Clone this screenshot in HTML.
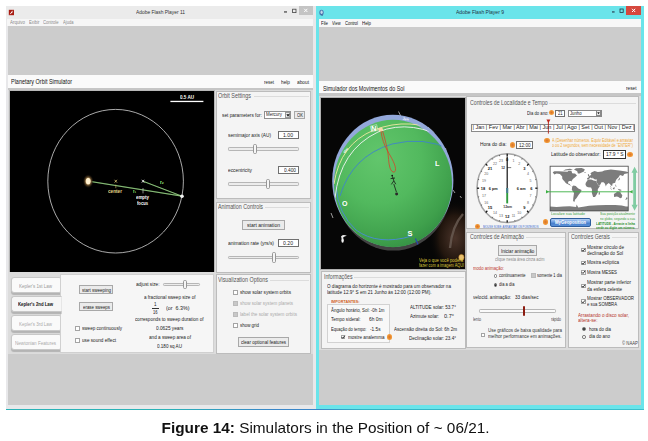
<!DOCTYPE html>
<html><head><meta charset="utf-8"><title>Figure 14</title>
<style>
html,body{margin:0;padding:0;background:#fff;}
body{width:648px;height:441px;position:relative;overflow:hidden;font-family:"Liberation Sans",sans-serif;}
.a{position:absolute;box-sizing:border-box;}
.t{position:absolute;white-space:pre;line-height:1;transform-origin:0 50%;}
.p{position:absolute;box-sizing:border-box;background:#f4f4f4;border:1.3px solid #bcbcbc;}
.btn{position:absolute;box-sizing:border-box;background:#ebebeb;border:0.9px solid #a8a8a8;}
.inp{position:absolute;box-sizing:border-box;background:#fff;border:0.8px solid #707070;}
.cb{position:absolute;box-sizing:border-box;background:#fff;border:0.8px solid #a4a4a4;width:4.6px;height:4.6px;}
.cbg{background:#c8c8c8;border-color:#bbb;}
.trk{position:absolute;box-sizing:border-box;height:3.6px;background:#ececec;border:0.7px solid #b6b6b6;border-radius:1.2px;margin-top:-0.5px;}
.thb{position:absolute;box-sizing:border-box;width:4px;height:10.2px;background:#f6f6f6;border:0.8px solid #969696;border-radius:1.6px;margin-left:-0.2px;}
.tab{position:absolute;box-sizing:border-box;background:#fafafa;border:0.8px solid #c8c8c8;border-radius:3px;box-shadow:0.6px 1.2px 0.8px #b4b4b4;}
.ln{position:absolute;height:0.8px;background:#dcdcdc;}
.oi{position:absolute;width:5.2px;height:5.2px;border-radius:50%;background:radial-gradient(#d8702a 0,#e88a30 35%,#f4a040 70%,#f6b868 100%);box-sizing:border-box;}
#cap{position:absolute;left:161.6px;top:420px;font-size:15.35px;line-height:1;color:#111;white-space:pre;}
</style></head>
<body>
<div id="shot" class="a" style="left:0;top:0;width:648px;height:441px;filter:blur(0.35px);">
<!-- ================= LEFT WINDOW ================= -->
<div class="a" style="left:6px;top:6px;width:309.8px;height:402.7px;background:#e8e8ea;"></div>
<div class="a" style="left:8px;top:6px;width:304.8px;height:398.8px;background:#cccccc;"></div>
<div class="a" style="left:6px;top:6px;width:307px;height:12.6px;background:#ebebeb;"></div>
<div class="a" style="left:7px;top:18.6px;width:306px;height:7.9px;background:#f6f6f6;"></div>
<div class="a" style="left:299px;top:6px;width:13.7px;height:8.6px;background:#c4c4c4;"></div>
<svg class="a" style="left:0;top:0" width="648" height="441" viewBox="0 0 648 441">
  <rect x="8.8" y="9.8" width="5.2" height="5.4" fill="#a81c12"/>
  <path d="M10.2 14.2 L12.6 10.8 M11 12.6 h1.4" stroke="#fff" stroke-width="0.9"/>
  <rect x="284" y="11.4" width="3" height="1.1" fill="#333"/>
  <rect x="292.6" y="9.2" width="3.4" height="3.4" fill="none" stroke="#444" stroke-width="0.8"/>
  <path d="M304.2 8.8 L307.4 12 M307.4 8.8 L304.2 12" stroke="#fff" stroke-width="1"/>
</svg>
<!-- title strip -->
<div class="a" style="left:8px;top:75.4px;width:304.8px;height:12.2px;background:#fafafa;"></div>
<div class="a" style="left:8px;top:87.6px;width:304.8px;height:266px;background:#dcdcdc;"></div>
<div class="a" style="left:8px;top:87.6px;width:304.8px;height:2.6px;background:#c6c6c6;"></div>
<!-- black stage -->
<div class="a" style="left:9px;top:90px;width:206px;height:182.4px;background:#b8b8b8;"></div>
<div class="a" style="left:10.2px;top:91.2px;width:203.8px;height:180.4px;background:#000;"></div>
<svg class="a" style="left:0;top:0" width="648" height="441" viewBox="0 0 648 441">
<defs><radialGradient id="sung"><stop offset="0" stop-color="#fff4d8"/><stop offset="0.4" stop-color="#f0dcae"/><stop offset="0.55" stop-color="#6e5430"/><stop offset="1" stop-color="#1a1004" stop-opacity="0"/></radialGradient></defs>
<ellipse cx="115.6" cy="181.2" rx="67.8" ry="71.8" fill="none" stroke="#d4d4d4" stroke-width="0.8"/>
<rect x="170.4" y="100.8" width="33" height="1.3" fill="#fff"/>
<path d="M88.5 181.2 L182 196.2 M143 181.2 L182 196.2" stroke="#58b048" stroke-width="1.2" fill="none" opacity="0.6"/>
<path d="M88.5 181.2 L182 196.2 M143 181.2 L182 196.2" stroke="#c4eeb0" stroke-width="0.6" fill="none"/>
<ellipse cx="88.2" cy="181.2" rx="5.4" ry="7" fill="url(#sung)"/>
<ellipse cx="88.2" cy="181.2" rx="1.9" ry="2.9" fill="#fff0d0"/>
<circle cx="182" cy="196.2" r="1.8" fill="#f4f4f4"/>
<path d="M114.6 179.8 l2.4 2.8 m0 -2.8 l-2.4 2.8" stroke="#f0dc80" stroke-width="0.7"/>
<path d="M115.8 184.6 v3.6" stroke="#c8b860" stroke-width="0.6"/>
<path d="M141.8 179.8 l2.4 2.8 m0 -2.8 l-2.4 2.8" stroke="#fff" stroke-width="0.8"/>
<path d="M143 188 v5.4" stroke="#ddd" stroke-width="0.6"/>
</svg>
<!-- Orbit Settings -->
<div class="p" style="left:216px;top:90.6px;width:94.6px;height:108.6px;"></div>
<div class="ln" style="left:253.5px;top:96px;width:55px;"></div>
<div class="inp" style="left:264.4px;top:110.8px;width:26.6px;height:8.6px;border-color:#909090;"></div>
<div class="a" style="left:284.8px;top:111.8px;width:5.4px;height:6.6px;background:#ececec;border:0.6px solid #9a9a9a;"></div>
<svg class="a" style="left:285.6px;top:113.8px" width="4" height="3" viewBox="0 0 4 3"><path d="M0.4 0.3 L3.6 0.3 L2 2.7 Z" fill="#111"/></svg>
<div class="btn" style="left:294.4px;top:110.8px;width:10.4px;height:8.6px;"></div>
<div class="inp" style="left:278px;top:131.4px;width:20.8px;height:7.4px;"></div>
<div class="trk" style="left:228px;top:147.6px;width:70.8px;"></div>
<div class="thb" style="left:253.6px;top:143.8px;"></div>
<div class="inp" style="left:278px;top:166.2px;width:20.8px;height:7.6px;"></div>
<div class="trk" style="left:228px;top:182.6px;width:70.8px;"></div>
<div class="thb" style="left:266.2px;top:178.8px;"></div>
<!-- Animation Controls -->
<div class="p" style="left:216px;top:202px;width:94.6px;height:70.6px;"></div>
<div class="ln" style="left:264.5px;top:207px;width:44px;"></div>
<div class="btn" style="left:242.3px;top:220px;width:42.6px;height:9.6px;"></div>
<div class="inp" style="left:278px;top:239.4px;width:20.8px;height:7.8px;"></div>
<div class="trk" style="left:228px;top:256.2px;width:70.8px;"></div>
<div class="thb" style="left:272.2px;top:252.4px;"></div>
<!-- Visualization Options -->
<div class="p" style="left:216px;top:274.4px;width:94.6px;height:79.2px;"></div>
<div class="ln" style="left:269.5px;top:280px;width:39px;"></div>
<div class="cb" style="left:233.2px;top:290.4px;"></div>
<div class="cb cbg" style="left:233.2px;top:301.2px;"></div>
<div class="cb cbg" style="left:233.2px;top:312.2px;"></div>
<div class="cb" style="left:233.2px;top:323.2px;"></div>
<div class="btn" style="left:238.2px;top:337.2px;width:50.4px;height:9.6px;"></div>
<!-- tabs + sweep panel -->
<div class="tab" style="left:10.6px;top:277.2px;width:51px;height:16px;"></div>
<div class="tab" style="left:10.6px;top:315.4px;width:51px;height:16px;"></div>
<div class="tab" style="left:10.6px;top:334.4px;width:51px;height:16px;"></div>
<div class="p" style="left:59.6px;top:273.6px;width:154.6px;height:79.4px;border-color:#d0d0d0;background:#f6f6f6;"></div>
<div class="tab" style="left:10.6px;top:296.2px;width:51px;height:16px;border-right:none;border-radius:3px 0 0 3px;background:#f6f6f6;clip-path:inset(-2px 0 -3px -2px);"></div>
<div class="btn" style="left:79.2px;top:285px;width:33.6px;height:9px;"></div>
<div class="btn" style="left:79.2px;top:302.4px;width:33.6px;height:9px;"></div>
<div class="cb" style="left:75.4px;top:326px;"></div>
<div class="cb" style="left:75.4px;top:338.2px;"></div>
<div class="trk" style="left:163px;top:283.4px;width:36.8px;"></div>
<div class="thb" style="left:183.6px;top:279.8px;height:9.4px;"></div>
<div class="a" style="left:151.6px;top:308px;width:7.4px;height:0.7px;background:#333;"></div>

<!-- ================= RIGHT WINDOW ================= -->
<div class="a" style="left:315.7px;top:6px;width:328.5px;height:402.8px;background:#6ae4ea;"></div>
<div class="a" style="left:318.8px;top:19px;width:322.2px;height:385.6px;background:#cccccc;"></div>
<div class="a" style="left:318.8px;top:19px;width:322.2px;height:7.6px;background:#f7f7f7;"></div>
<div class="a" style="left:626px;top:6px;width:15px;height:8.6px;background:#d6483e;"></div>
<svg class="a" style="left:0;top:0" width="648" height="441" viewBox="0 0 648 441">
  <ellipse cx="321.5" cy="12.6" rx="2.2" ry="2.9" fill="#4a78b0"/>
  <ellipse cx="321.6" cy="12.2" rx="1.1" ry="1.7" fill="#c4d8ea"/>
  <path d="M321.6 14.4 l0.8 1.6" stroke="#3a5a8a" stroke-width="0.8"/>
  <rect x="612" y="11.4" width="2.6" height="1.1" fill="#234"/>
  <rect x="620" y="9" width="3.2" height="3.4" fill="none" stroke="#234" stroke-width="0.8"/>
  <path d="M632 8.8 L635.2 12 M635.2 8.8 L632 12" stroke="#fff" stroke-width="1"/>
</svg>
<div class="a" style="left:318.8px;top:81.2px;width:322.2px;height:12.2px;background:#fafafa;"></div>
<div class="a" style="left:318.8px;top:93.4px;width:322.2px;height:257px;background:#dcdcdc;"></div>
<div class="a" style="left:318.8px;top:93.4px;width:322.2px;height:2.6px;background:#c6c6c6;"></div>
<!-- sphere stage -->
<div class="a" style="left:320.4px;top:96.6px;width:145.4px;height:173.4px;background:#b0b0b0;"></div>
<div class="a" style="left:321.4px;top:97.6px;width:143.6px;height:171.4px;background:#060606;"></div>
<svg class="a" style="left:0;top:0" width="648" height="441" viewBox="0 0 648 441">
<defs>
<clipPath id="stg"><rect x="321.4" y="97.6" width="143.6" height="171.4"/></clipPath>
<radialGradient id="grn" cx="0.38" cy="0.3" r="0.8"><stop offset="0" stop-color="#62c66c"/><stop offset="0.45" stop-color="#52b95e"/><stop offset="0.8" stop-color="#3fa04c"/><stop offset="1" stop-color="#2f8a40"/></radialGradient>
<radialGradient id="neb" cx="0.5" cy="0.5" r="0.5"><stop offset="0" stop-color="#4a342a"/><stop offset="0.6" stop-color="#22160e"/><stop offset="1" stop-color="#060606" stop-opacity="0"/></radialGradient>
<clipPath id="disc"><ellipse cx="393.2" cy="183.2" rx="59.4" ry="64.6"/></clipPath>
</defs>
<g clip-path="url(#stg)">
<ellipse cx="455" cy="238" rx="26" ry="38" fill="url(#neb)"/>
<path d="M463 214 Q452 226 450 248" stroke="#6a5c54" stroke-width="2.4" fill="none" opacity="0.8"/>
<g stroke="#d8d8d8" stroke-width="0.8" fill="none" opacity="0.9"><path d="M398.5 111.5 l3 6"/><path d="M428 127 l6.5 6"/><path d="M445.5 148 l1.8 10"/><path d="M336.5 172 l0.6 5"/><path d="M449 176 l-0.6 9"/><path d="M453 190 l2 3"/><path d="M460 196 l1.5 2"/><path d="M375 246.5 l6 1.5"/><path d="M331 213 l2 5"/></g>
<path d="M341 236.5 q2.2 -2.6 6 -0.6 q-3.6 -0.2 -5 3.6 z" fill="#e8e8e8"/>
<ellipse cx="342.6" cy="240.4" rx="1.2" ry="2.4" fill="#f4f4f4"/>
<ellipse cx="393.4" cy="185.6" rx="58.4" ry="65" fill="#424242"/>
<ellipse cx="392.8" cy="180.8" rx="60.6" ry="66" fill="#93a8da"/>
<ellipse cx="393" cy="183.5" rx="59" ry="63.7" fill="url(#grn)"/>
<g clip-path="url(#disc)" fill="none">
<path d="M340 196 Q352 156 392 144 Q424 136 452 150" stroke="#3f84c8" stroke-width="0.9"/>
<path d="M336 186 Q338 214 356 230 Q378 246 412 236" stroke="#4a8ad8" stroke-width="0.9"/>
<path d="M334 184 Q340 144 374 130 Q410 116 446 134" stroke="#f0e8a0" stroke-width="0.9"/>
<path d="M335 198 Q340 150 378 132 Q412 118 452 142" stroke="#f4f4f4" stroke-width="0.9"/>
</g>
<text x="402.5" y="119.6" font-size="3.4" font-weight="bold" fill="#fff" font-family="Liberation Sans, sans-serif" transform="rotate(10 402.5 119.6)">Jun</text>
<text x="345" y="153.5" font-size="3.4" font-weight="bold" fill="#fff" font-family="Liberation Sans, sans-serif" transform="rotate(-52 345 153.5)">Mai</text>
<path d="M415.4 238.4 l2.6 6" stroke="#2a4ab0" stroke-width="1.2"/>
<path d="M370.2 126.2 l6.4 -1.6 l1.4 5.6 l-6.4 1.6 z" stroke="#f0f0f0" stroke-width="0.5" fill="none"/>
<ellipse cx="380.6" cy="129.6" rx="2.4" ry="2" fill="#f6d8a8"/>
<path d="M381 131 C381.6 138 384.6 146 387.6 151 C391 157 396.6 166 395.4 170.6 C394.4 173.6 391.4 172 390 168 C388.4 163 388.6 156 387.6 151 C386.6 145 384.4 137 382.6 131" stroke="#d2452a" stroke-width="0.8" fill="none"/>
<g stroke="#151515" stroke-width="0.8" fill="none"><path d="M392.4 176.4 l1.4 4.4 l-2.4 3.6 M393.8 180.8 l2 3.4 M390.6 178.6 l4.4 -0.6 M393.8 184 l2.6 8"/></g>
<circle cx="392.2" cy="175.6" r="0.9" fill="#151515"/><ellipse cx="396.6" cy="194" rx="1.5" ry="1.4" fill="#2a2a2a"/>
<ellipse cx="461.4" cy="257.4" rx="2.6" ry="3" fill="#e8c070" stroke="#c89030" stroke-width="0.6"/>
</g></svg>
<!-- Informações -->
<div class="p" style="left:320.6px;top:271.3px;width:145px;height:77.7px;"></div>
<div class="ln" style="left:353.5px;top:277px;width:110px;"></div>
<div class="a" style="left:327px;top:303.8px;width:62.6px;height:38.8px;border:0.8px solid #d2d2d2;background:#f8f8f8;"></div>
<div class="cb" style="left:340.8px;top:334.8px;"></div>
<div class="oi" style="left:387.2px;top:334.4px;"></div>
<!-- Localidade e Tempo -->
<div class="p" style="left:466.4px;top:96.4px;width:172.4px;height:132.8px;"></div>
<div class="ln" style="left:549px;top:102.6px;width:87px;"></div>
<div class="oi" style="left:548.8px;top:110.2px;"></div>
<div class="inp" style="left:555px;top:109.6px;width:9.6px;height:7.4px;"></div>
<div class="inp" style="left:567.8px;top:109.6px;width:33.8px;height:7.4px;border-color:#888;"></div>
<div class="a" style="left:596.4px;top:110.4px;width:4.6px;height:5.8px;background:#e8e8e8;border:0.6px solid #888;"></div>
<svg class="a" style="left:597.3px;top:112.2px" width="3" height="2.4" viewBox="0 0 3 2.4"><path d="M0.2 0.2 L2.8 0.2 L1.5 2.2 Z" fill="#222"/></svg>
<div class="a" style="left:471px;top:124.2px;width:164px;height:8px;background:#fff;border:0.7px solid #8a8a8a;"></div>
<div class="oi" style="left:544.4px;top:138px;"></div>
<div class="oi" style="left:509.6px;top:142.4px;"></div>
<div class="inp" style="left:516px;top:141.4px;width:16.8px;height:7.6px;"></div>
<div class="inp" style="left:603.4px;top:150.2px;width:22.8px;height:8.4px;border-color:#333;"></div>
<div class="oi" style="left:627.4px;top:151.8px;"></div>
<div class="oi" style="left:475.4px;top:224px;width:4.6px;height:4.6px;"></div>
<div class="oi" style="left:543px;top:219.4px;width:4.8px;height:5.4px;"></div>
<div class="a" style="left:549.8px;top:217.8px;width:40.8px;height:9.2px;border-radius:2px;border:0.8px solid #2c5c9c;background:linear-gradient(#b4d0f4,#6a9ce0 45%,#4a80cc 60%,#5a90d8);"></div>
<svg class="a" style="left:0;top:0" width="648" height="441" viewBox="0 0 648 441" font-family="'Liberation Sans',sans-serif">
<path d="M548.4 120 V133.6" stroke="#b02418" stroke-width="0.9"/><path d="M546.4 119.6 h4 l-2 3.4 z" fill="#c0281c"/>
<ellipse cx="507.2" cy="188.2" rx="30.2" ry="34.4" fill="#fff" stroke="#a4a4a4" stroke-width="1.5"/>
<path d="M507.2 156.2 L507.2 153.8" stroke="#111" stroke-width="1.3"/>
<path d="M514.7 156.3 L515.0 155.0" stroke="#111" stroke-width="0.5"/>
<path d="M521.7 159.6 L522.3 158.4" stroke="#111" stroke-width="0.5"/>
<path d="M527.1 165.6 L528.6 163.9" stroke="#111" stroke-width="1.3"/>
<path d="M532.3 171.7 L533.4 171.0" stroke="#111" stroke-width="0.5"/>
<path d="M535.2 179.7 L536.4 179.3" stroke="#111" stroke-width="0.5"/>
<path d="M535.3 188.2 L537.4 188.2" stroke="#111" stroke-width="1.3"/>
<path d="M535.2 196.7 L536.4 197.1" stroke="#111" stroke-width="0.5"/>
<path d="M532.3 204.7 L533.4 205.4" stroke="#111" stroke-width="0.5"/>
<path d="M527.1 210.8 L528.6 212.5" stroke="#111" stroke-width="1.3"/>
<path d="M521.7 216.8 L522.3 218.0" stroke="#111" stroke-width="0.5"/>
<path d="M514.7 220.1 L515.0 221.4" stroke="#111" stroke-width="0.5"/>
<path d="M507.2 220.2 L507.2 222.6" stroke="#111" stroke-width="1.3"/>
<path d="M499.7 220.1 L499.4 221.4" stroke="#111" stroke-width="0.5"/>
<path d="M492.7 216.8 L492.1 218.0" stroke="#111" stroke-width="0.5"/>
<path d="M487.3 210.8 L485.8 212.5" stroke="#111" stroke-width="1.3"/>
<path d="M482.1 204.7 L481.0 205.4" stroke="#111" stroke-width="0.5"/>
<path d="M479.2 196.7 L478.0 197.1" stroke="#111" stroke-width="0.5"/>
<path d="M479.1 188.2 L477.0 188.2" stroke="#111" stroke-width="1.3"/>
<path d="M479.2 179.7 L478.0 179.3" stroke="#111" stroke-width="0.5"/>
<path d="M482.1 171.7 L481.0 171.0" stroke="#111" stroke-width="0.5"/>
<path d="M487.3 165.6 L485.8 163.9" stroke="#111" stroke-width="1.3"/>
<path d="M492.7 159.6 L492.1 158.4" stroke="#111" stroke-width="0.5"/>
<path d="M499.7 156.3 L499.4 155.0" stroke="#111" stroke-width="0.5"/>
<text x="507.2" y="161.3" font-size="4" text-anchor="middle" fill="#111" font-weight="bold">0</text>
<text x="513.5" y="162.3" font-size="3.6" text-anchor="middle" fill="#666">1</text>
<text x="519.3" y="165.1" font-size="3.6" text-anchor="middle" fill="#666">2</text>
<text x="524.3" y="169.6" font-size="4" text-anchor="middle" fill="#111" font-weight="bold">3</text>
<text x="528.1" y="175.4" font-size="3.6" text-anchor="middle" fill="#666">4</text>
<text x="530.5" y="182.2" font-size="3.6" text-anchor="middle" fill="#666">5</text>
<text x="531.4" y="189.5" font-size="4" text-anchor="middle" fill="#111" font-weight="bold">6</text>
<text x="530.5" y="196.8" font-size="3.6" text-anchor="middle" fill="#666">7</text>
<text x="528.1" y="203.6" font-size="3.6" text-anchor="middle" fill="#666">8</text>
<text x="524.3" y="209.4" font-size="4" text-anchor="middle" fill="#111" font-weight="bold">9</text>
<text x="519.3" y="213.9" font-size="3.6" text-anchor="middle" fill="#666">10</text>
<text x="513.5" y="216.7" font-size="3.6" text-anchor="middle" fill="#666">11</text>
<text x="507.2" y="217.7" font-size="4" text-anchor="middle" fill="#111" font-weight="bold">12</text>
<text x="500.9" y="216.7" font-size="3.6" text-anchor="middle" fill="#666">13</text>
<text x="495.1" y="213.9" font-size="3.6" text-anchor="middle" fill="#666">14</text>
<text x="490.1" y="209.4" font-size="4" text-anchor="middle" fill="#111" font-weight="bold">15</text>
<text x="486.3" y="203.6" font-size="3.6" text-anchor="middle" fill="#666">16</text>
<text x="483.9" y="196.8" font-size="3.6" text-anchor="middle" fill="#666">17</text>
<text x="483.0" y="189.5" font-size="4" text-anchor="middle" fill="#111" font-weight="bold">18</text>
<text x="483.9" y="182.2" font-size="3.6" text-anchor="middle" fill="#666">19</text>
<text x="486.3" y="175.4" font-size="3.6" text-anchor="middle" fill="#666">20</text>
<text x="490.1" y="169.6" font-size="4" text-anchor="middle" fill="#111" font-weight="bold">21</text>
<text x="495.1" y="165.1" font-size="3.6" text-anchor="middle" fill="#666">22</text>
<text x="500.9" y="162.3" font-size="3.6" text-anchor="middle" fill="#666">23</text>
<text x="493.3" y="189.6" font-size="3.8" text-anchor="middle" font-weight="bold" fill="#111">6 pm</text>
<text x="521.2" y="189.6" font-size="3.8" text-anchor="middle" font-weight="bold" fill="#111">6 am</text>
<text x="507.6" y="207.6" font-size="3.4" text-anchor="middle" font-weight="bold" fill="#333">12am</text>
<text x="505" y="168.8" font-size="3.4" text-anchor="end" font-weight="bold" fill="#333">12</text>
<path d="M507.2 167.6 h4" stroke="#222" stroke-width="0.6"/>
<path d="M507.2 156.4 V189" stroke="#111" stroke-width="1.2"/>
<path d="M507.2 188 V203.4" stroke="#2f9a3c" stroke-width="1.9"/>
<path d="M507.2 188 V193" stroke="#4a7a98" stroke-width="1.9"/>
<rect x="550.1" y="166.2" width="78.1" height="44.7" fill="#fff"/>
<polygon points="552.7,172.2 554.4,171.2 558.8,171.2 563.1,171.4 567.5,171.7 568.5,170.7 571.4,170.7 572.2,173.2 574.0,173.6 575.0,173.6 577.0,175.6 574.8,177.4 572.9,179.1 571.6,180.9 571.8,182.1 571.1,181.1 569.6,181.1 568.1,181.8 568.1,183.6 569.6,184.1 570.3,185.1 571.1,186.1 572.2,186.6 571.8,186.6 570.7,185.8 568.5,184.6 566.4,183.6 565.3,182.6 564.2,181.1 563.1,180.1 562.2,178.6 562.2,176.6 559.9,174.1 556.6,173.6 554.4,174.6 553.4,173.2" fill="#7c7c7c"/>
<polygon points="563.1,170.7 567.5,170.2 570.7,169.9 572.9,169.2 569.6,168.7 565.3,169.4" fill="#7c7c7c"/>
<polygon points="577.9,173.6 579.6,173.6 583.9,171.4 584.8,169.2 581.6,167.9 576.1,168.2 574.0,169.4 577.2,171.2" fill="#7c7c7c"/>
<polygon points="572.2,186.6 573.5,185.6 575.7,186.1 578.3,188.5 581.6,190.0 580.7,192.3 578.7,194.8 576.6,198.0 575.0,199.7 574.4,202.0 573.1,201.0 573.3,198.0 574.0,193.0 571.8,189.8" fill="#7c7c7c"/>
<polygon points="587.0,179.6 587.2,177.9 588.7,177.6 588.3,176.6 589.6,175.9 590.9,175.1 591.3,174.1 590.2,173.6 591.8,172.2 594.6,170.9 597.8,171.9 602.2,171.4 604.3,170.4 610.8,169.4 619.5,170.4 626.0,171.4 628.2,172.2 627.8,173.2 624.3,174.1 623.0,175.9 620.0,175.1 618.4,177.6 616.7,179.1 615.6,181.1 615.2,182.8 612.6,183.6 612.1,186.1 610.8,185.3 610.4,186.6 611.5,188.3 610.4,184.6 608.7,183.1 606.5,184.8 605.9,186.6 604.8,183.6 603.5,182.3 601.5,182.3 600.4,184.6 598.7,185.6 596.3,181.6 597.0,179.6 595.0,179.4 594.1,179.1 593.5,178.6 592.0,177.4 592.4,179.1 590.9,177.6 589.8,177.9 589.1,179.1" fill="#7c7c7c"/>
<polygon points="585.5,184.8 585.7,183.1 587.0,181.1 588.1,179.6 591.3,179.4 593.5,180.6 596.1,180.9 597.0,183.1 598.5,185.6 600.2,185.6 597.8,189.3 597.8,192.3 596.7,194.5 595.0,197.0 593.1,197.0 591.8,192.8 592.0,189.8 591.1,187.6 588.1,187.3 586.5,186.6" fill="#7c7c7c"/>
<polygon points="613.9,194.0 615.6,193.0 617.4,191.5 618.9,191.5 618.9,192.5 620.0,191.3 620.8,193.3 622.3,195.3 621.7,197.7 620.2,198.2 618.4,197.0 616.9,196.5 614.1,197.0" fill="#7c7c7c"/>
<polygon points="598.7,192.5 600.0,192.0 599.8,194.5 598.7,194.8" fill="#7c7c7c"/>
<polygon points="617.4,180.6 619.5,179.9 620.0,177.6 619.3,178.1 618.2,179.9" fill="#7c7c7c"/>
<polygon points="626.5,197.2 627.8,198.0 626.0,200.0 625.4,199.7" fill="#7c7c7c"/>
<polygon points="617.6,188.8 619.7,189.3 621.7,190.0 620.8,190.8 619.1,190.5" fill="#7c7c7c"/>
<polygon points="612.8,188.3 614.5,187.1 614.7,188.3 614.1,189.5 613.0,189.0" fill="#7c7c7c"/>
<polygon points="609.8,187.3 611.7,189.3 612.1,190.0 610.8,189.0" fill="#7c7c7c"/>
<polygon points="588.1,176.1 589.4,175.9 588.7,174.1 587.8,174.4" fill="#7c7c7c"/>
<polygon points="583.9,172.7 586.1,172.7 585.9,172.2 584.4,172.2" fill="#7c7c7c"/>
<polygon points="615.2,184.1 616.1,185.6 616.5,186.8 615.6,186.6" fill="#7c7c7c"/>
<polygon points="550.1,210.9 550.1,206.4 556.6,206.9 563.1,206.4 569.6,206.2 576.1,206.9 576.6,204.4 578.3,207.4 584.8,206.4 589.1,205.7 597.8,205.2 606.5,204.9 615.2,204.9 621.7,205.4 626.0,206.4 628.2,206.4 628.2,210.9" fill="#7c7c7c"/>
<rect x="550.1" y="166.2" width="78.1" height="44.7" fill="none" stroke="#444" stroke-width="0.8"/>
<path d="M546.4 191.8 H632.2" stroke="#3cb043" stroke-width="0.9"/>
<path d="M546 190 l3 1.8 l-3 1.8 z M632.6 190 l-3 1.8 l3 1.8 z" fill="#3cb043"/>
<path d="M634.6 166.8 l3.1 6 h-1.7 v32 h1.7 l-3.1 6 l-3.1 -6 h1.7 v-32 h-1.7 z" fill="#80cca2"/>
</svg>
<!-- Controles de Animação -->
<div class="p" style="left:466.4px;top:231.6px;width:99.6px;height:116.2px;"></div>
<div class="ln" style="left:525.5px;top:237.2px;width:39px;"></div>
<div class="btn" style="left:497.6px;top:245.2px;width:39.4px;height:11.2px;"></div>
<div class="a" style="left:493.6px;top:273.8px;width:3.8px;height:3.8px;border-radius:50%;border:0.7px solid #777;background:#fff;"></div>
<div class="a" style="left:493.6px;top:283.2px;width:3.8px;height:3.8px;border-radius:50%;border:0.7px solid #555;background:#fff;"></div>
<div class="a" style="left:494.7px;top:284.3px;width:1.6px;height:1.6px;border-radius:50%;background:#222;"></div>
<div class="cb cbg" style="left:531.4px;top:273.4px;"></div>
<div class="trk" style="left:478.8px;top:309.6px;width:77px;background:#fafafa;"></div>
<div class="a" style="left:522.6px;top:305.8px;width:2.4px;height:10.4px;background:#8c1c10;border-radius:1px;"></div>
<div class="cb" style="left:480.6px;top:332.6px;"></div>
<!-- Controles Gerais -->
<div class="p" style="left:567.8px;top:231.6px;width:71px;height:116.2px;"></div>
<div class="ln" style="left:611.5px;top:237.2px;width:25px;"></div>
<div class="cb" style="left:581px;top:247.8px;"></div>
<div class="cb" style="left:581px;top:260.8px;"></div>
<div class="cb" style="left:581px;top:270px;"></div>
<div class="cb" style="left:581px;top:283.8px;"></div>
<div class="cb" style="left:581px;top:299.4px;"></div>
<div class="a" style="left:582.2px;top:327.4px;width:3.6px;height:3.6px;border-radius:50%;border:0.7px solid #666;background:#fff;"></div>
<div class="a" style="left:583.2px;top:328.4px;width:1.6px;height:1.6px;border-radius:50%;background:#222;"></div>
<div class="a" style="left:582.2px;top:335.4px;width:3.6px;height:3.6px;border-radius:50%;border:0.7px solid #666;background:#fff;"></div>
<svg class="a" style="left:0;top:0" width="648" height="441" viewBox="0 0 648 441" fill="none" stroke="#222" stroke-width="0.9">
  <path d="M581.8 250 l1.2 1.3 l2 -2.6"/><path d="M581.8 263 l1.2 1.3 l2 -2.6"/><path d="M581.8 272.2 l1.2 1.3 l2 -2.6"/>
  <path d="M581.8 286 l1.2 1.3 l2 -2.6"/><path d="M581.8 301.6 l1.2 1.3 l2 -2.6"/><path d="M341.6 337 l1.2 1.3 l2 -2.6"/>
</svg>
<!-- bottom line -->
<div class="a" style="left:6px;top:408.6px;width:638.2px;height:1.3px;background:linear-gradient(90deg,#2ab2b6,#2ab2b6 25%,#3a86c8 42%,#3a86c8 49%,#34b4c4 56%,#3cc0cc);"></div>

<!-- ================= TEXT ================= -->
<span class="t" style="left:136.0px;top:9px;font-size:6px;color:#333;transform:scaleX(0.813);">Adobe Flash Player 11</span>
<span class="t" style="left:10.0px;top:20px;font-size:5.5px;color:#8a8a8a;transform:scaleX(0.804);">Arquivo</span>
<span class="t" style="left:28.5px;top:20px;font-size:5.5px;color:#8a8a8a;transform:scaleX(0.763);">Exibir</span>
<span class="t" style="left:43.0px;top:20px;font-size:5.5px;color:#8a8a8a;transform:scaleX(0.745);">Controle</span>
<span class="t" style="left:62.5px;top:20px;font-size:5.5px;color:#8a8a8a;transform:scaleX(0.746);">Ajuda</span>
<span class="t" style="left:11.0px;top:79px;font-size:6.5px;color:#111;transform:scaleX(0.840);">Planetary Orbit Simulator</span>
<span class="t" style="left:264.0px;top:79px;font-size:6px;color:#222;transform:scaleX(0.749);">reset</span>
<span class="t" style="left:281.0px;top:79px;font-size:6px;color:#222;transform:scaleX(0.793);">help</span>
<span class="t" style="left:297.0px;top:79px;font-size:6px;color:#222;transform:scaleX(0.799);">about</span>
<span class="t" style="left:180.0px;top:95px;font-size:5px;color:#fff;font-weight:bold;transform:scaleX(0.910);">0.5 AU</span>
<span class="t" style="left:108.0px;top:189px;font-size:5px;color:#e6d88a;font-weight:bold;transform:scaleX(0.932);">center</span>
<span class="t" style="left:136.0px;top:195px;font-size:5px;color:#fff;font-weight:bold;transform:scaleX(0.882);">empty</span>
<span class="t" style="left:137.0px;top:201px;font-size:5px;color:#fff;font-weight:bold;transform:scaleX(0.824);">focus</span>
<span class="t" style="left:133.0px;top:190px;font-size:4.5px;color:#98ee7c;font-weight:bold;transform:scaleX(0.828);">r₁</span>
<span class="t" style="left:160.0px;top:181px;font-size:4.5px;color:#98ee7c;font-weight:bold;transform:scaleX(1.062);">r₂</span>
<span class="t" style="left:218.0px;top:92px;font-size:7px;color:#555;transform:scaleX(0.778);">Orbit Settings</span>
<span class="t" style="left:222.0px;top:112px;font-size:6px;color:#222;transform:scaleX(0.794);">set parameters for:</span>
<span class="t" style="left:266.0px;top:112px;font-size:5.5px;color:#222;transform:scaleX(0.805);">Mercury</span>
<span class="t" style="left:296.5px;top:113px;font-size:5.5px;color:#222;transform:scaleX(0.754);">OK</span>
<span class="t" style="left:228.0px;top:132px;font-size:6px;color:#222;transform:scaleX(0.796);">semimajor axis (AU)</span>
<span class="t" style="left:283.0px;top:133px;font-size:5.5px;color:#222;transform:scaleX(0.933);">1.00</span>
<span class="t" style="left:228.0px;top:167px;font-size:6px;color:#222;transform:scaleX(0.800);">eccentricity</span>
<span class="t" style="left:284.0px;top:168px;font-size:5.5px;color:#222;transform:scaleX(0.872);">0.400</span>
<span class="t" style="left:218.0px;top:203px;font-size:7px;color:#555;transform:scaleX(0.761);">Animation Controls</span>
<span class="t" style="left:247.0px;top:222px;font-size:6px;color:#222;transform:scaleX(0.838);">start animation</span>
<span class="t" style="left:228.0px;top:240px;font-size:6px;color:#222;transform:scaleX(0.816);">animation rate (yrs/s)</span>
<span class="t" style="left:283.0px;top:241px;font-size:5.5px;color:#222;transform:scaleX(0.933);">0.20</span>
<span class="t" style="left:218.0px;top:276px;font-size:7px;color:#555;transform:scaleX(0.766);">Visualization Options</span>
<span class="t" style="left:240.0px;top:289px;font-size:6px;color:#222;transform:scaleX(0.776);">show solar system orbits</span>
<span class="t" style="left:240.0px;top:300px;font-size:6px;color:#aaa;transform:scaleX(0.753);">show solar system planets</span>
<span class="t" style="left:240.0px;top:311px;font-size:6px;color:#aaa;transform:scaleX(0.766);">label the solar system orbits</span>
<span class="t" style="left:240.0px;top:322px;font-size:6px;color:#222;transform:scaleX(0.740);">show grid</span>
<span class="t" style="left:241.0px;top:339px;font-size:6px;color:#222;transform:scaleX(0.762);">clear optional features</span>
<span class="t" style="left:19.0px;top:284px;font-size:5.5px;color:#999;transform:scaleX(0.821);">Kepler&#x27;s 1st Law</span>
<span class="t" style="left:18.0px;top:302px;font-size:5.5px;color:#111;font-weight:bold;transform:scaleX(0.778);">Kepler&#x27;s 2nd Law</span>
<span class="t" style="left:19.0px;top:322px;font-size:5.5px;color:#aaa;transform:scaleX(0.809);">Kepler&#x27;s 3rd Law</span>
<span class="t" style="left:15.0px;top:341px;font-size:5.5px;color:#aaa;transform:scaleX(0.833);">Newtonian Features</span>
<span class="t" style="left:81.5px;top:287px;font-size:6px;color:#222;transform:scaleX(0.750);">start sweeping</span>
<span class="t" style="left:82.5px;top:304px;font-size:6px;color:#222;transform:scaleX(0.729);">erase sweeps</span>
<span class="t" style="left:82.0px;top:325px;font-size:6px;color:#222;transform:scaleX(0.764);">sweep continuously</span>
<span class="t" style="left:82.0px;top:337px;font-size:6px;color:#222;transform:scaleX(0.774);">use sound effect</span>
<span class="t" style="left:135.5px;top:281px;font-size:6px;color:#222;transform:scaleX(0.783);">adjust size:</span>
<span class="t" style="left:144.0px;top:294px;font-size:6px;color:#222;transform:scaleX(0.764);">a fractional sweep size of</span>
<span class="t" style="left:154.0px;top:302px;font-size:5px;color:#222;transform:scaleX(0.899);">1</span>
<span class="t" style="left:153.0px;top:310px;font-size:5px;color:#222;transform:scaleX(0.809);">16</span>
<span class="t" style="left:165.5px;top:305px;font-size:6px;color:#222;transform:scaleX(0.892);">(or  6.3%)</span>
<span class="t" style="left:135.0px;top:316px;font-size:6px;color:#222;transform:scaleX(0.772);">corresponds to sweep duration of</span>
<span class="t" style="left:156.0px;top:325px;font-size:6px;color:#222;transform:scaleX(0.792);">0.0625 years</span>
<span class="t" style="left:149.0px;top:334px;font-size:6px;color:#222;transform:scaleX(0.772);">and a sweep area of</span>
<span class="t" style="left:157.0px;top:343px;font-size:6px;color:#222;transform:scaleX(0.764);">0.180 sq AU</span>
<span class="t" style="left:456.0px;top:9px;font-size:6px;color:#234;transform:scaleX(0.837);">Adobe Flash Player 9</span>
<span class="t" style="left:320.5px;top:21px;font-size:5.5px;color:#111;transform:scaleX(0.789);">File</span>
<span class="t" style="left:331.5px;top:21px;font-size:5.5px;color:#111;transform:scaleX(0.719);">View</span>
<span class="t" style="left:344.5px;top:21px;font-size:5.5px;color:#111;transform:scaleX(0.733);">Control</span>
<span class="t" style="left:362.0px;top:21px;font-size:5.5px;color:#111;transform:scaleX(0.796);">Help</span>
<span class="t" style="left:323.0px;top:85px;font-size:7px;color:#111;transform:scaleX(0.767);">Simulador dos Movimentos do Sol</span>
<span class="t" style="left:626.0px;top:85px;font-size:6px;color:#222;transform:scaleX(0.787);">reset</span>
<span class="t" style="left:469.8px;top:99px;font-size:7px;color:#555;transform:scaleX(0.746);">Controles de Localidade e Tempo</span>
<span class="t" style="left:526.5px;top:111px;font-size:5.5px;color:#222;transform:scaleX(0.764);">Dia do ano:</span>
<span class="t" style="left:557.5px;top:111px;font-size:5.5px;color:#222;transform:scaleX(0.735);">21</span>
<span class="t" style="left:569.5px;top:111px;font-size:5.5px;color:#222;transform:scaleX(0.767);">Junho</span>
<span class="t" style="left:472.5px;top:125px;font-size:5.5px;color:#222;">| Jan | Fev | Mar | Abr | Mai | Jun | Jul | Ago | Set | Out | Nov | Dez |</span>
<span class="t" style="left:552.0px;top:139px;font-size:4.5px;color:#f0a838;transform:scaleX(0.850);">A (Desenhar números. Equiv Editável e arrastar</span>
<span class="t" style="left:552.0px;top:144px;font-size:4.5px;color:#f0a838;transform:scaleX(0.826);">o ou 2 segundos, sem necessidade de “ENTER”)</span>
<span class="t" style="left:479.5px;top:142px;font-size:5.5px;color:#222;transform:scaleX(0.884);">Hora do dia:</span>
<span class="t" style="left:518.5px;top:143px;font-size:5.5px;color:#222;transform:scaleX(0.835);">12:00</span>
<span class="t" style="left:551.0px;top:151px;font-size:6px;color:#222;transform:scaleX(0.785);">Latitude do observador:</span>
<span class="t" style="left:606.0px;top:152px;font-size:5.5px;color:#222;transform:scaleX(0.891);">17.9 ° S</span>
<span class="t" style="left:551.0px;top:212px;font-size:4px;color:#3aa03a;transform:scaleX(0.938);">Localize sua latitude</span>
<span class="t" style="left:600.0px;top:212px;font-size:4px;color:#3aa03a;transform:scaleX(0.815);">Sua posição atualmente</span>
<span class="t" style="left:600.0px;top:217px;font-size:4px;color:#3aa03a;transform:scaleX(0.799);">no globo, segundo a sua</span>
<span class="t" style="left:596.0px;top:222px;font-size:4px;color:#2a902a;font-weight:bold;transform:scaleX(0.769);">LATITUDE - Arraste a linha</span>
<span class="t" style="left:596.0px;top:226px;font-size:4px;color:#2a902a;font-weight:bold;transform:scaleX(0.744);">verde ou digite um número.</span>
<span class="t" style="left:555.0px;top:220px;font-size:5px;color:#fff;font-weight:bold;transform:scaleX(0.858);">MyGeoposition</span>
<span class="t" style="left:482.5px;top:226px;font-size:3.8px;color:#3a6ad0;transform:scaleX(0.714);">MOUSE SOBE: ARRASTAR OS PONTEIROS</span>
<span class="t" style="left:470.0px;top:234px;font-size:6.5px;color:#555;transform:scaleX(0.803);">Controles de Animação</span>
<span class="t" style="left:500.8px;top:248px;font-size:6px;color:#222;transform:scaleX(0.760);">Iniciar animação</span>
<span class="t" style="left:495.0px;top:258px;font-size:4.5px;color:#888;transform:scaleX(0.872);">clique nesta área cinza acim</span>
<span class="t" style="left:473.0px;top:266px;font-size:5.5px;color:#c0392b;transform:scaleX(0.762);">modo animação:</span>
<span class="t" style="left:498.5px;top:273px;font-size:5px;color:#222;transform:scaleX(0.808);">continuamente</span>
<span class="t" style="left:537.0px;top:273px;font-size:5px;color:#222;transform:scaleX(0.796);">somente 1 dia</span>
<span class="t" style="left:498.5px;top:282px;font-size:5px;color:#222;transform:scaleX(0.820);">dia a dia</span>
<span class="t" style="left:473.0px;top:295px;font-size:5.5px;color:#222;transform:scaleX(0.834);">velocid. animação:</span>
<span class="t" style="left:515.0px;top:295px;font-size:5.5px;color:#222;transform:scaleX(0.844);">33 dias/sec</span>
<span class="t" style="left:473.0px;top:318px;font-size:4.5px;color:#444;transform:scaleX(0.819);">lento</span>
<span class="t" style="left:550.5px;top:318px;font-size:4.5px;color:#444;transform:scaleX(0.799);">rápido</span>
<span class="t" style="left:487.5px;top:328px;font-size:5.5px;color:#333;transform:scaleX(0.815);">Use gráficos de baixa qualidade para</span>
<span class="t" style="left:487.5px;top:334px;font-size:5.5px;color:#333;transform:scaleX(0.835);">melhor performance em animações.</span>
<span class="t" style="left:571.0px;top:234px;font-size:6.5px;color:#555;transform:scaleX(0.799);">Controles Gerais</span>
<span class="t" style="left:587.0px;top:245px;font-size:5.5px;color:#222;transform:scaleX(0.841);">Mostrar círculo de</span>
<span class="t" style="left:587.0px;top:251px;font-size:5.5px;color:#222;transform:scaleX(0.829);">declinação do Sol</span>
<span class="t" style="left:587.0px;top:260px;font-size:5.5px;color:#222;transform:scaleX(0.831);">Mostra eclíptica</span>
<span class="t" style="left:587.0px;top:270px;font-size:5.5px;color:#222;transform:scaleX(0.798);">Mostra MESES</span>
<span class="t" style="left:587.0px;top:280px;font-size:5.5px;color:#222;transform:scaleX(0.862);">Mostrar parte inferior</span>
<span class="t" style="left:587.0px;top:287px;font-size:5.5px;color:#222;transform:scaleX(0.836);">da esfera celeste</span>
<span class="t" style="left:587.0px;top:296px;font-size:5.5px;color:#222;transform:scaleX(0.804);">Mostrar OBSERVADOR</span>
<span class="t" style="left:587.0px;top:302px;font-size:5.5px;color:#222;transform:scaleX(0.773);">e sua SOMBRA</span>
<span class="t" style="left:577.5px;top:313px;font-size:5.5px;color:#b5332a;transform:scaleX(0.842);">Arrastando o disco solar,</span>
<span class="t" style="left:577.5px;top:318px;font-size:5.5px;color:#b5332a;transform:scaleX(0.850);">altera-se:</span>
<span class="t" style="left:588.5px;top:327px;font-size:5.5px;color:#222;transform:scaleX(0.799);">hora do dia</span>
<span class="t" style="left:588.5px;top:334px;font-size:5.5px;color:#222;transform:scaleX(0.817);">dia do ano</span>
<span class="t" style="left:621.5px;top:342px;font-size:4.5px;color:#444;transform:scaleX(0.945);">© NAAP</span>
<span class="t" style="left:323.5px;top:273px;font-size:7px;color:#555;transform:scaleX(0.740);">Informações</span>
<span class="t" style="left:327.0px;top:284px;font-size:5.5px;color:#222;transform:scaleX(0.838);">O diagrama do horizonte é mostrado para um observador na</span>
<span class="t" style="left:327.0px;top:290px;font-size:5.5px;color:#222;transform:scaleX(0.846);">latitude 12.9° S em 21 Junho às 12:00 (12:00 PM).</span>
<span class="t" style="left:331.0px;top:300px;font-size:4.2px;color:#d0601a;font-weight:bold;transform:scaleX(0.903);">IMPORTANTES:</span>
<span class="t" style="left:330.5px;top:308px;font-size:5.5px;color:#222;transform:scaleX(0.799);">Ângulo horário, Sol: -0h 1m</span>
<span class="t" style="left:330.5px;top:317px;font-size:5.5px;color:#222;transform:scaleX(0.824);">Tempo sideral:</span>
<span class="t" style="left:368.5px;top:317px;font-size:5.5px;color:#222;transform:scaleX(0.883);">6h 0m</span>
<span class="t" style="left:330.5px;top:327px;font-size:5.5px;color:#222;transform:scaleX(0.744);">Equação do tempo:</span>
<span class="t" style="left:369.5px;top:327px;font-size:5.5px;color:#222;transform:scaleX(0.858);">-1.5s</span>
<span class="t" style="left:347.5px;top:335px;font-size:5.5px;color:#222;transform:scaleX(0.829);">mostre analemma</span>
<span class="t" style="left:409.5px;top:305px;font-size:5.5px;color:#222;transform:scaleX(0.827);">ALTITUDE solar: 53.7°</span>
<span class="t" style="left:410.0px;top:314px;font-size:5.5px;color:#222;transform:scaleX(0.832);">Azimute solar:</span>
<span class="t" style="left:444.0px;top:314px;font-size:5.5px;color:#222;transform:scaleX(1.014);">0.7°</span>
<span class="t" style="left:394.0px;top:327px;font-size:5.5px;color:#222;transform:scaleX(0.827);">Ascensão direita do Sol: 6h 2m</span>
<span class="t" style="left:408.5px;top:336px;font-size:5.5px;color:#222;transform:scaleX(0.830);">Declinação solar: 23.4°</span>
<span class="t" style="left:419.0px;top:259px;font-size:4.5px;color:#dcc63a;transform:scaleX(0.930);">Veja o que você poderá</span>
<span class="t" style="left:419.0px;top:264px;font-size:4.5px;color:#dcc63a;transform:scaleX(0.853);">fazer com a imagem AQUI</span>
<span class="t" style="left:370.5px;top:125px;font-size:7px;color:#fff;font-weight:bold;transform:scaleX(1.086);">N</span>
<span class="t" style="left:434.5px;top:160px;font-size:7.5px;color:#fff;font-weight:bold;transform:scaleX(0.980);">L</span>
<span class="t" style="left:341.5px;top:200px;font-size:7.5px;color:#fff;font-weight:bold;transform:scaleX(0.941);">O</span>
<span class="t" style="left:407.5px;top:230px;font-size:7.5px;color:#fff;font-weight:bold;">S</span>
<div id="cap"><b>Figure 14:</b> Simulators in the Position of ~ 06/21.</div>
</div>
</body></html>
